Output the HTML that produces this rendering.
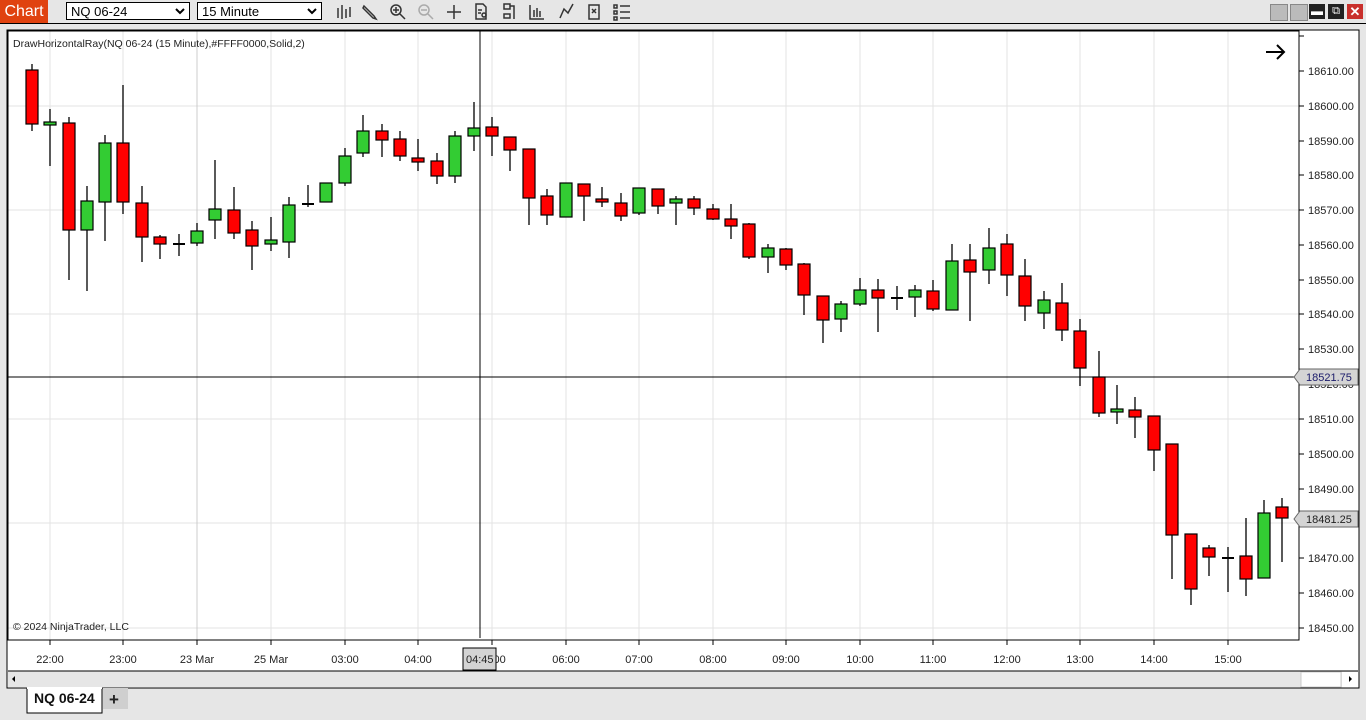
<!DOCTYPE html>
<html><head><meta charset="utf-8"><style>
body{margin:0;width:1366px;height:720px;background:#e6e6e6;font-family:"Liberation Sans",sans-serif;overflow:hidden;position:relative}
.abs{position:absolute}
.sel{position:absolute;top:2px;height:18px;border:1px solid #000;background:#fff;font-size:13px;line-height:17px;padding-left:4px;box-sizing:border-box}
.sel svg{position:absolute;right:4px;top:5px}
</style></head><body>
<div class="abs" style="left:0;top:0;width:1366px;height:23px;background:#e6e6e6;border-bottom:1px solid #000"></div>
<div class="abs" style="left:0;top:0;width:48px;height:23px;background:#e0420f;color:#fff;font-size:16px;line-height:23px;text-align:center">Chart</div>
<div class="sel" style="left:66px;width:124px">NQ 06-24<svg width="10" height="7"><path d="M1 1l4 4l4-4" stroke="#000" stroke-width="2" fill="none"/></svg></div>
<div class="sel" style="left:197px;width:125px">15 Minute<svg width="10" height="7"><path d="M1 1l4 4l4-4" stroke="#000" stroke-width="2" fill="none"/></svg></div>
<svg class="abs" style="left:330px;top:0" width="310" height="23" fill="none" stroke="#333" stroke-width="1.5">
<path d="M8 8v10M12 5v14M16 9v9M20 7v10"/>
<path d="M34 6l10 10l2 3l-3 -1l-10 -10z"/>
<circle cx="66" cy="10" r="5"/><path d="M70 14l5 5M63 10h6M66 7v6"/>
<g stroke="#aaa"><circle cx="94" cy="10" r="5"/><path d="M98 14l5 5M91 10h6"/></g>
<path d="M124 5v14M117 12h14"/>
<path d="M146 4h7l3 3v12h-10z M148 10h4M148 13h3"/><circle cx="154" cy="15" r="2"/>
<path d="M174 4h6v5h-6zM180 6h4v13M174 14h6v4h-6z"/>
<path d="M200 5v14h14M204 10v7M207 8v9M210 11v6"/>
<path d="M230 18l4 -9l4 4l5 -9"/>
<path d="M259 5h10v14h-10zM262 9l4 4M266 9l-4 4"/>
<path d="M284 5h3v3h-3zM284 11h3v3h-3zM284 17h3v3h-3zM290 6h10M290 12h10M290 18h10"/>
</svg>
<div class="abs" style="left:1270px;top:4px;width:16px;height:15px;background:#bbb;border:1px solid #888"></div>
<div class="abs" style="left:1290px;top:4px;width:16px;height:15px;background:#bbb;border:1px solid #888"></div>
<div class="abs" style="left:1309px;top:4px;width:16px;height:15px;background:#222;color:#fff;font-size:12px;text-align:center;line-height:15px">&#9644;</div>
<div class="abs" style="left:1328px;top:4px;width:16px;height:15px;background:#222;color:#fff;font-size:11px;text-align:center;line-height:15px">&#10697;</div>
<div class="abs" style="left:1347px;top:4px;width:16px;height:15px;background:#c9302c;color:#fff;font-size:13px;font-weight:bold;text-align:center;line-height:15px">&#10005;</div>

<svg class="abs" style="left:0;top:0" width="1366" height="720" font-family="Liberation Sans, sans-serif">
<rect x="7" y="30" width="1352" height="658" fill="#fff" stroke="#000"/>
<g stroke="#e3e3e3">
<path d="M50 31V640M123 31V640M271 31V640M345 31V640M418 31V640M492 31V640M566 31V640M639 31V640M713 31V640M786 31V640M860 31V640M933 31V640M1007 31V640M1080 31V640M1154 31V640M1228 31V640"/>
<path d="M8 106H1299M8 210H1299M8 314H1299M8 419H1299M8 523H1299M8 628H1299"/>
</g>
<path d="M197 31V640" stroke="#ccc"/>
<rect x="8" y="31" width="1291" height="609" fill="none" stroke="#000"/>
<g stroke="#000"><path d="M1299 36h5M1299 71h5M1299 106h5M1299 141h5M1299 175h5M1299 210h5M1299 245h5M1299 280h5M1299 314h5M1299 349h5M1299 384h5M1299 419h5M1299 454h5M1299 489h5M1299 523h5M1299 558h5M1299 593h5M1299 628h5"/>
<path d="M50 640v5M123 640v5M197 640v5M271 640v5M345 640v5M418 640v5M492 640v5M566 640v5M639 640v5M713 640v5M786 640v5M860 640v5M933 640v5M1007 640v5M1080 640v5M1154 640v5M1228 640v5"/></g>
<g font-size="11" fill="#222">
<text x="1308" y="75">18610.00</text><text x="1308" y="110">18600.00</text><text x="1308" y="145">18590.00</text><text x="1308" y="179">18580.00</text><text x="1308" y="214">18570.00</text><text x="1308" y="249">18560.00</text><text x="1308" y="284">18550.00</text><text x="1308" y="318">18540.00</text><text x="1308" y="353">18530.00</text><text x="1308" y="388">18520.00</text><text x="1308" y="423">18510.00</text><text x="1308" y="458">18500.00</text><text x="1308" y="493">18490.00</text><text x="1308" y="527">18480.00</text><text x="1308" y="562">18470.00</text><text x="1308" y="597">18460.00</text><text x="1308" y="632">18450.00</text>
<g text-anchor="middle"><text x="50" y="663">22:00</text><text x="123" y="663">23:00</text><text x="197" y="663">23 Mar</text><text x="271" y="663">25 Mar</text><text x="345" y="663">03:00</text><text x="418" y="663">04:00</text><text x="492" y="663">05:00</text><text x="566" y="663">06:00</text><text x="639" y="663">07:00</text><text x="713" y="663">08:00</text><text x="786" y="663">09:00</text><text x="860" y="663">10:00</text><text x="933" y="663">11:00</text><text x="1007" y="663">12:00</text><text x="1080" y="663">13:00</text><text x="1154" y="663">14:00</text><text x="1228" y="663">15:00</text></g>
<text x="13" y="47" font-size="10.5">DrawHorizontalRay(NQ 06-24 (15 Minute),#FFFF0000,Solid,2)</text>
<text x="13" y="630" font-size="10.5">© 2024 NinjaTrader, LLC</text>
</g>
<path d="M1266 52h17M1277 45l7 7l-7 7" stroke="#000" stroke-width="2" fill="none"/>
<g stroke="#000" stroke-width="1.3">
<path d="M32 64V131M50 109V166M69 117V280M87 186V291M105 135V241M123 85V214M142 186V262M160 235V259M179 234V256M197 223V246M215 160V239M234 187V239M252 221V270M271 217V251M289 197V258M308 185V207M326 183V202M345 148V186M363 115V157M382 124V157M400 131V161M418 139V171M437 153V184M455 131V183M474 102V151M492 117V156M510 137V171M529 149V225M547 189V225M566 183V217M584 184V221M602 187V207M621 193V221M639 188V215M658 189V214M676 196V225M694 196V215M713 204V220M731 204V239M749 223V259M768 244V273M786 248V270M804 263V315M823 296V343M841 301V332M860 278V306M878 279V332M897 286V310M915 285V317M933 280V311M952 244V310M970 244V321M989 228V284M1007 234V296M1025 259V321M1044 291V329M1062 283V341M1080 319V386M1099 351V417M1117 385V424M1135 397V438M1154 416V471M1172 444V579M1191 534V605M1209 545V576M1228 547V592M1246 518V596M1264 500V578M1282 498V562"/>
<path d="M173 244h12M302 204h12M891 298h12M1222 558h12" stroke-width="2"/>
</g>
<g stroke="#000" stroke-width="1.2">
<g fill="#ff0000">
<rect x="26" y="70" width="12" height="54"/><rect x="63" y="123" width="12" height="107"/><rect x="117" y="143" width="12" height="59"/><rect x="136" y="203" width="12" height="34"/><rect x="154" y="237" width="12" height="7"/><rect x="228" y="210" width="12" height="23"/><rect x="246" y="230" width="12" height="16"/><rect x="376" y="131" width="12" height="9"/><rect x="394" y="139" width="12" height="17"/><rect x="412" y="158" width="12" height="4"/><rect x="431" y="161" width="12" height="15"/><rect x="486" y="127" width="12" height="9"/><rect x="504" y="137" width="12" height="13"/><rect x="523" y="149" width="12" height="49"/><rect x="541" y="196" width="12" height="19"/><rect x="578" y="184" width="12" height="12"/><rect x="596" y="199" width="12" height="3"/><rect x="615" y="203" width="12" height="13"/><rect x="652" y="189" width="12" height="17"/><rect x="688" y="199" width="12" height="9"/><rect x="707" y="209" width="12" height="10"/><rect x="725" y="219" width="12" height="7"/><rect x="743" y="224" width="12" height="33"/><rect x="780" y="249" width="12" height="16"/><rect x="798" y="264" width="12" height="31"/><rect x="817" y="296" width="12" height="24"/><rect x="872" y="290" width="12" height="8"/><rect x="927" y="291" width="12" height="18"/><rect x="964" y="260" width="12" height="12"/><rect x="1001" y="244" width="12" height="31"/><rect x="1019" y="276" width="12" height="30"/><rect x="1056" y="303" width="12" height="27"/><rect x="1074" y="331" width="12" height="37"/><rect x="1093" y="377" width="12" height="36"/><rect x="1129" y="410" width="12" height="7"/><rect x="1148" y="416" width="12" height="34"/><rect x="1166" y="444" width="12" height="91"/><rect x="1185" y="534" width="12" height="55"/><rect x="1203" y="548" width="12" height="9"/><rect x="1240" y="556" width="12" height="23"/><rect x="1276" y="507" width="12" height="11"/>
</g>
<g fill="#33cc33">
<rect x="44" y="122" width="12" height="3"/><rect x="81" y="201" width="12" height="29"/><rect x="99" y="143" width="12" height="59"/><rect x="191" y="231" width="12" height="12"/><rect x="209" y="209" width="12" height="11"/><rect x="265" y="240" width="12" height="4"/><rect x="283" y="205" width="12" height="37"/><rect x="320" y="183" width="12" height="19"/><rect x="339" y="156" width="12" height="27"/><rect x="357" y="131" width="12" height="22"/><rect x="449" y="136" width="12" height="40"/><rect x="468" y="128" width="12" height="8"/><rect x="560" y="183" width="12" height="34"/><rect x="633" y="188" width="12" height="25"/><rect x="670" y="199" width="12" height="4"/><rect x="762" y="248" width="12" height="9"/><rect x="835" y="304" width="12" height="15"/><rect x="854" y="290" width="12" height="14"/><rect x="909" y="290" width="12" height="7"/><rect x="946" y="261" width="12" height="49"/><rect x="983" y="248" width="12" height="22"/><rect x="1038" y="300" width="12" height="13"/><rect x="1111" y="409" width="12" height="3"/><rect x="1258" y="513" width="12" height="65"/>
</g></g>
<path d="M8 377H1294M480 31V638" stroke="#000"/>
<g stroke="#666" fill="#d4d4d4"><path d="M1294 377l6 -8h58v16h-58z"/><path d="M1294 519l6 -8h58v16h-58z"/><rect x="463" y="648" width="33" height="22" stroke="#000"/></g>
<g font-size="11"><text x="1306" y="381" fill="#1a1a6a">18521.75</text><text x="1306" y="523" fill="#222">18481.25</text><text x="466" y="663" fill="#222">04:45</text></g>
<rect x="8" y="671" width="1350" height="16" fill="#e6e6e6"/>
<path d="M8 671H1358" stroke="#000"/>
<path d="M15 676l-3 3l3 3z" fill="#000"/>
<rect x="1301" y="672" width="40" height="15" fill="#fff" stroke="#ccc"/>
<rect x="1342" y="672" width="16" height="15" fill="#fff"/>
<path d="M1349 676l3 3l-3 3z" fill="#000"/>
<rect x="27" y="688" width="75" height="25" fill="#fff" stroke="#000"/>
<rect x="27" y="687" width="75" height="2" fill="#fff"/>
<rect x="103" y="688" width="25" height="21" fill="#cfcfcf"/>
<text x="34" y="703" font-size="14" font-weight="bold" fill="#111">NQ 06-24</text>
<text x="109" y="705" font-size="17" font-weight="bold" fill="#222">+</text>
</svg>
</body></html>
